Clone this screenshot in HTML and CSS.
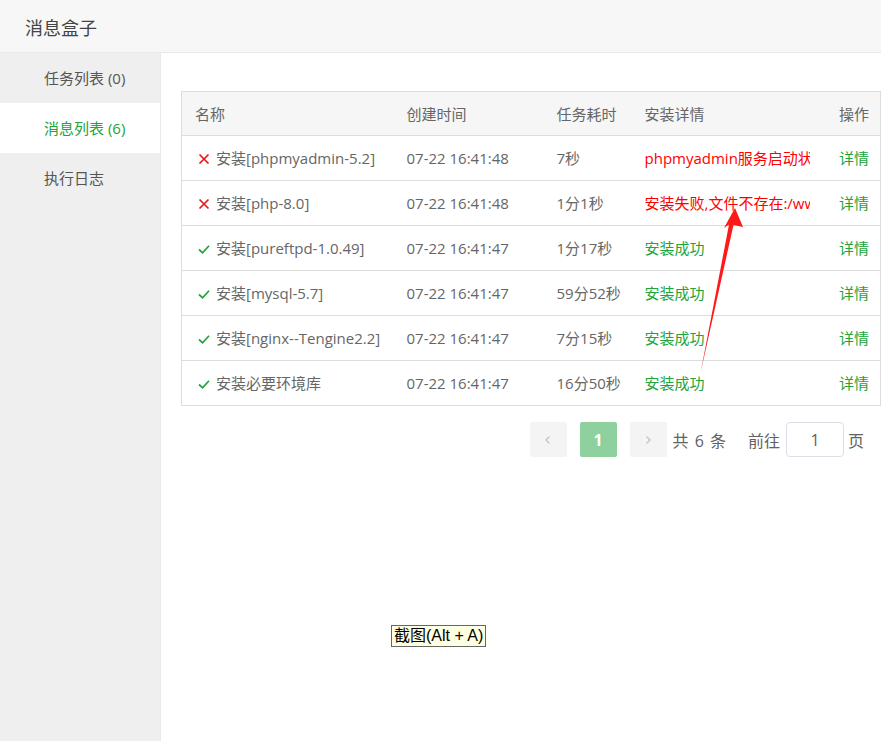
FILE: index.html
```html
<!DOCTYPE html>
<html lang="zh-CN">
<head>
<meta charset="utf-8">
<title>消息盒子</title>
<link rel="stylesheet" href="styles.css">
</head>
<body>
<div class="app">
  <header class="topbar"><span class="title">消息盒子</span></header>
  <div class="main">
    <nav class="sidebar">
      <div class="nav-item">任务列表 (0)</div>
      <div class="nav-item active">消息列表 (6)</div>
      <div class="nav-item">执行日志</div>
    </nav>
    <section class="content">
      <table class="grid">
        <colgroup>
          <col class="c-name"><col class="c-time"><col class="c-dur"><col class="c-detail"><col class="c-op">
        </colgroup>
        <thead>
          <tr><th>名称</th><th>创建时间</th><th>任务耗时</th><th>安装详情</th><th class="op">操作</th></tr>
        </thead>
        <tbody>
          <tr>
            <td><span class="st"><svg viewBox="0 0 12 12" width="12" height="12"><path d="M1.5 1.5 L10.5 10.5 M10.5 1.5 L1.5 10.5" fill="none" stroke="#f01414" stroke-width="1.7"/></svg></span>安装[phpmyadmin-5.2]</td>
            <td>07-22 16:41:48</td><td>7秒</td>
            <td><div class="clip err">phpmyadmin服务启动状态异常</div></td>
            <td class="op"><a class="link">详情</a></td>
          </tr>
          <tr>
            <td><span class="st"><svg viewBox="0 0 12 12" width="12" height="12"><path d="M1.5 1.5 L10.5 10.5 M10.5 1.5 L1.5 10.5" fill="none" stroke="#f01414" stroke-width="1.7"/></svg></span>安装[php-8.0]</td>
            <td>07-22 16:41:48</td><td>1分1秒</td>
            <td><div class="clip err">安装失败,文件不存在:/www/server/php/80/bin/php</div></td>
            <td class="op"><a class="link">详情</a></td>
          </tr>
          <tr>
            <td><span class="st"><svg viewBox="0 0 12 12" width="12" height="12"><path d="M1 6.5 L4.6 9.8 L11 2.8" fill="none" stroke="#20a53a" stroke-width="1.7"/></svg></span>安装[pureftpd-1.0.49]</td>
            <td>07-22 16:41:47</td><td>1分17秒</td>
            <td><div class="clip good">安装成功</div></td>
            <td class="op"><a class="link">详情</a></td>
          </tr>
          <tr>
            <td><span class="st"><svg viewBox="0 0 12 12" width="12" height="12"><path d="M1 6.5 L4.6 9.8 L11 2.8" fill="none" stroke="#20a53a" stroke-width="1.7"/></svg></span>安装[mysql-5.7]</td>
            <td>07-22 16:41:47</td><td>59分52秒</td>
            <td><div class="clip good">安装成功</div></td>
            <td class="op"><a class="link">详情</a></td>
          </tr>
          <tr>
            <td><span class="st"><svg viewBox="0 0 12 12" width="12" height="12"><path d="M1 6.5 L4.6 9.8 L11 2.8" fill="none" stroke="#20a53a" stroke-width="1.7"/></svg></span>安装[nginx--Tengine2.2]</td>
            <td>07-22 16:41:47</td><td>7分15秒</td>
            <td><div class="clip good">安装成功</div></td>
            <td class="op"><a class="link">详情</a></td>
          </tr>
          <tr>
            <td><span class="st"><svg viewBox="0 0 12 12" width="12" height="12"><path d="M1 6.5 L4.6 9.8 L11 2.8" fill="none" stroke="#20a53a" stroke-width="1.7"/></svg></span>安装必要环境库</td>
            <td>07-22 16:41:47</td><td>16分50秒</td>
            <td><div class="clip good">安装成功</div></td>
            <td class="op"><a class="link">详情</a></td>
          </tr>
        </tbody>
      </table>
      <div class="pager">
        <button class="pbtn"><svg viewBox="0 0 10 10" width="10" height="10"><path d="M6.5 1.5 L3 5 L6.5 8.5" fill="none" stroke="#c0c4cc" stroke-width="1.3"/></svg></button>
        <button class="pbtn cur">1</button>
        <button class="pbtn last"><svg viewBox="0 0 10 10" width="10" height="10"><path d="M3.5 1.5 L7 5 L3.5 8.5" fill="none" stroke="#c0c4cc" stroke-width="1.3"/></svg></button>
        <span class="total">共 6 条</span>
        <span class="goto">前往</span>
        <span class="pinput">1</span>
        <span class="unit">页</span>
      </div>
    </section>
  </div>
  <svg class="arrow" width="881" height="741" viewBox="0 0 881 741">
    <polygon points="735,208 743,227 733.5,225 700.5,373 729,224.5 724,228" fill="#ff1a1a"/>
  </svg>
  <div class="tip">截图(Alt + A)</div>
</div>
</body>
</html>
```
FILE: styles.css
```css
* { box-sizing: border-box; }
html, body { margin: 0; padding: 0; }
body {
  width: 881px;
  height: 741px;
  overflow: hidden;
  background: #fff;
  font-family: "Open Sans", "Noto Sans CJK SC", sans-serif;
  font-size: 15px;
  color: #666;
}
.app { position: relative; width: 881px; height: 741px; display: flex; flex-direction: column; }
.topbar {
  height: 53px;
  flex: none;
  background: #f7f7f7;
  border-bottom: 1px solid #e9e9e9;
  display: flex;
  align-items: center;
  padding-left: 25px;
}
.title { font-size: 18px; color: #444; position: relative; top: 1px; }
.main { flex: 1; display: flex; min-height: 0; }
.sidebar { width: 161px; flex: none; background: #efefef; border-right: 1px solid #eaeaea; }
.nav-item {
  height: 50px;
  line-height: 50px;
  padding-left: 44px;
  font-size: 15px;
  color: #555;
}
.nav-item.active { background: #fff; color: #20a53a; }
.content { flex: 1; padding: 38px 0 0 20px; }
.grid {
  width: 699px;
  table-layout: fixed;
  border-collapse: collapse;
  border: 1px solid #dddddd;
}
.c-name { width: 212px; }
.c-time { width: 150px; }
.c-dur { width: 88px; }
.c-detail { width: 193px; }
.c-op { width: 56px; }
.grid th {
  height: 44px;
  background: #f6f6f6;
  font-weight: normal;
  text-align: left;
  padding: 0 0 0 13px;
  color: #666;
  border-bottom: 1px solid #dddddd;
}
.grid td {
  height: 45px;
  padding: 0 0 1px 13px;
  border-bottom: 1px solid #dddddd;
  white-space: nowrap;
  color: #666;
}
.grid th.op, .grid td.op { text-align: right; padding: 0 11px 1px 0; }
.st { display: inline-block; width: 12px; margin-left: 3px; margin-right: 6px; vertical-align: -1px; }
.st svg { display: block; }
.clip { overflow: hidden; white-space: nowrap; width: 165px; }
.err { color: #ff0000; }
.good { color: #20a53a; }
.link { color: #20a53a; text-decoration: none; }
.pager {
  display: flex;
  align-items: center;
  justify-content: flex-end;
  width: 683px;
  margin-top: 16px;
  font-size: 16px;
  color: #606266;
}
.pbtn {
  width: 37px;
  height: 35px;
  border: none;
  border-radius: 2px;
  background: #f4f4f5;
  margin-right: 13px;
  display: flex;
  align-items: center;
  justify-content: center;
  font-family: inherit;
  font-size: 16px;
  font-weight: bold;
  color: #fff;
  padding: 0;
}
.pbtn.cur { background: #8fd19e; }
.pbtn.last { margin-right: 6px; }
.total { margin-right: 22px; word-spacing: 2px; }
.goto { margin-right: 6px; }
.pinput {
  width: 58px;
  height: 35px;
  border: 1px solid #dcdfe6;
  border-radius: 4px;
  display: flex;
  align-items: center;
  justify-content: center;
  color: #606266;
  margin-right: 4px;
}
.arrow { position: absolute; left: 0; top: 0; pointer-events: none; }
.tip {
  position: absolute;
  left: 391px;
  top: 625px;
  height: 22px;
  padding: 0 2px;
  border: 1px solid #666;
  background: #ffffe1;
  color: #000;
  font-family: "Liberation Sans", "Noto Sans CJK SC", sans-serif;
  font-size: 16px;
  line-height: 20px;
}
```
